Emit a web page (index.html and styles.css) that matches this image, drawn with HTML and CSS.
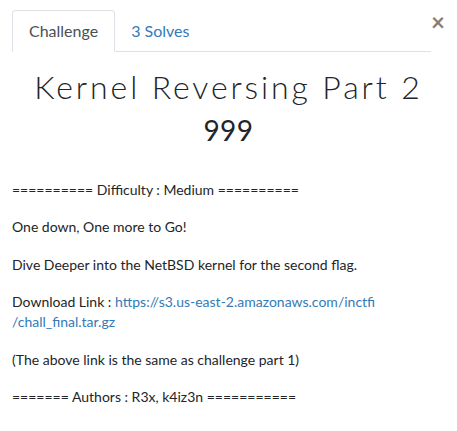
FILE: index.html
```html
<!DOCTYPE html>
<html>
<head>
<meta charset="utf-8">
<link rel="stylesheet" href="styles.css">
</head>
<body>
<div class="modal">
  <div class="top">
    <ul class="tabs">
      <li class="tab active">Challenge</li>
      <li class="tab link">3 Solves</li>
    </ul>
    <button class="close" aria-label="Close">&times;</button>
  </div>
  <h2 class="name">Kernel Reversing Part 2</h2>
  <h3 class="value">999</h3>
  <div class="desc">
    <p>========== Difficulty : Medium ==========</p>
    <p>One down, One more to Go!</p>
    <p>Dive Deeper into the NetBSD kernel for the second flag.</p>
    <p>Download Link : <a href="#">https://s3.us-east-2.amazonaws.com/inctfi<br>/chall_final.tar.gz</a></p>
    <p>(The above link is the same as challenge part 1)</p>
    <p>======= Authors : R3x, k4iz3n ===========</p>
  </div>
</div>
</body>
</html>
```
FILE: styles.css
```css
* { box-sizing: border-box; }
html, body { margin: 0; padding: 0; background: #fff; }
body {
  font-family: Lato, "Liberation Sans", sans-serif;
  color: #212529;
}
.modal { padding: 10px 12px 0 12px; }
.top { display: flex; align-items: flex-start; }
.tabs {
  flex: 1;
  display: flex;
  list-style: none;
  margin: 0;
  padding: 0;
  border-bottom: 1px solid #dee2e6;
}
.tab {
  font-size: 16px;
  line-height: 24px;
  padding: 8px 16px;
  border: 1px solid transparent;
  border-top-left-radius: 4px;
  border-top-right-radius: 4px;
  margin-bottom: -1px;
}
.tab.active {
  color: #495057;
  background: #fff;
  border-color: #dee2e6 #dee2e6 #fff;
}
.tab.link { color: #337ab7; padding-left: 15px; }
.close {
  width: 14px;
  padding: 0;
  margin: 0;
  border: 0;
  background: transparent;
  font-family: Lato, sans-serif;
  font-size: 24px;
  font-weight: 700;
  line-height: 1;
  color: #000;
  opacity: .5;
}
.name {
  font-family: Lato, sans-serif;
  font-weight: 300;
  font-size: 32px;
  line-height: 1.2;
  letter-spacing: 2.9px;
  text-align: center;
  margin: 16px 0 8px;
}
.value {
  font-family: Lato, sans-serif;
  font-weight: 400;
  font-size: 28px;
  line-height: 1.2;
  letter-spacing: 0.5px;
  text-align: center;
  margin: 0 0 32px;
}
.desc { font-size: 14px; line-height: 20px; }
.desc p { margin: 0 0 17.4px; }
.desc a { color: #337ab7; text-decoration: none; }
```
